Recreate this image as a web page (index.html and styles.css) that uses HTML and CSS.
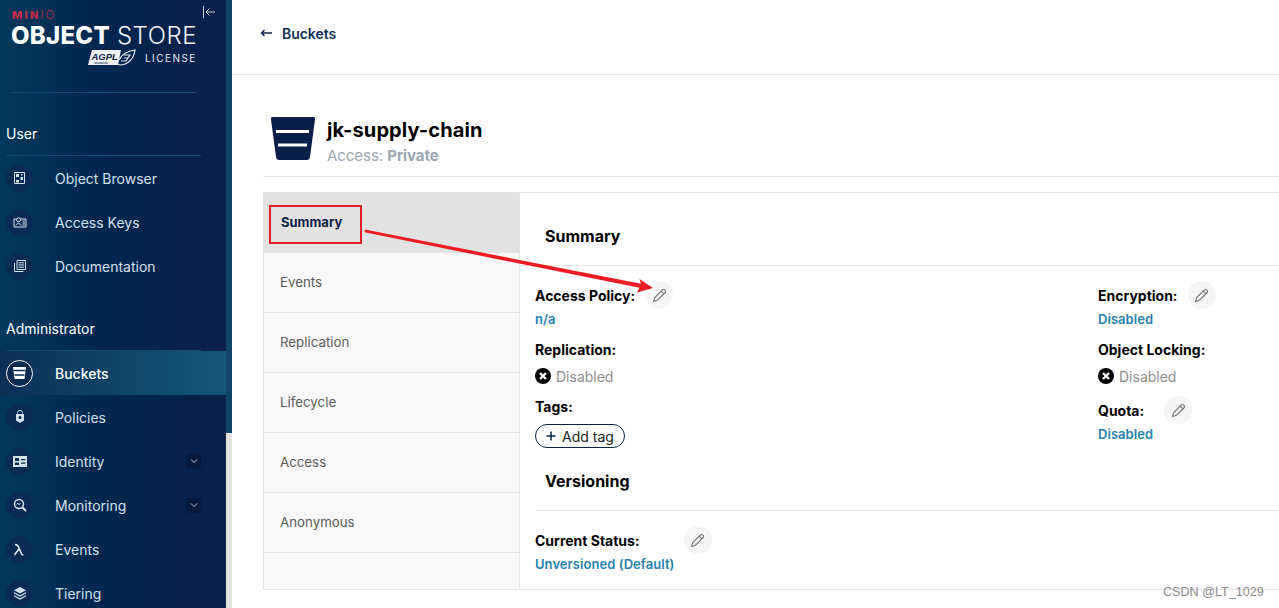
FILE: index.html
```html
<!DOCTYPE html>
<html lang="en">
<head>
<meta charset="utf-8">
<title>jk-supply-chain</title>
<link rel="stylesheet" href="styles.css">
</head>
<body>
<div class="app">
  <aside class="sidebar">
    <button class="collapse" aria-label="Collapse">
      <svg width="14" height="14" viewBox="0 0 14 14" fill="none" stroke="#c4ccd6" stroke-width="1"><path d="M1.500 1v12M13 7H4M7.500 3.500 4 7l3.500 3.500"/></svg>
    </button>
    <div class="logo">
      <div class="logo-minio"><b>MIN</b>IO</div>
      <div class="logo-title"><b>OBJECT</b><span>STORE</span></div>
      <div class="logo-license">
        <svg class="agpl" width="48" height="17" viewBox="0 0 48 17">
          <path d="M4 1h29l-3 15H0z" fill="#eef2f5"/>
          <text x="3.500" y="10.500" class="agpl-text">AGPL</text>
          <path d="M6 14h14" stroke="#0a2148" stroke-width=".8"/>
          <path d="M31 11c3-6 8-9 16-10-1 8-6 14-14 15-2 0-3-.5-4-1" fill="none" stroke="#e8edf2" stroke-width="1.200"/>
          <path d="M36 6h6l-2 3h-4m4 0-2 3h-5" fill="none" stroke="#e8edf2" stroke-width="1.200"/>
        </svg>
        <span>LICENSE</span>
      </div>
    </div>
    <div class="logo-rule"></div>

    <h3 class="nav-head nav-head-user">User</h3>
    <nav class="nav nav-user">
      <a class="nav-item"><span class="nav-icon"><svg width="11" height="12" viewBox="0 0 11 12" fill="none" stroke="#d5e2ee"><path d="M.5.500h10v11H.5z"/><path d="M2 2h3v3H2zM6.500 5H9v3H6.500zM2 8h3v2.500H2zM7 2h1.500v1.500H7z" fill="#d5e2ee" stroke="none"/></svg></span>Object Browser</a>
      <a class="nav-item"><span class="nav-icon"><svg width="14" height="12" viewBox="0 0 14 12" fill="none" stroke="#d5e2ee"><path d="M1 3h12v8H1z"/><circle cx="5.500" cy="3.800" r="2" fill="#0a2b53"/><path d="M2.800 9.500c.4-2.500 5-2.500 5.400 0M9.500 5h2.500M9.500 7h2.500M9.500 9h2.500"/></svg></span>Access Keys</a>
      <a class="nav-item"><span class="nav-icon"><svg width="14" height="14" viewBox="0 0 14 14" fill="none" stroke="#d5e2ee"><path d="M4 1.500h8.500v9H4z"/><path d="M1.500 4v8.500H10.500"/><path d="M5.500 3.800h5.500M5.500 6h5.500M5.500 8.200h5.500"/></svg></span>Documentation</a>
    </nav>

    <h3 class="nav-head nav-head-admin">Administrator</h3>
    <nav class="nav">
      <a class="nav-item nav-item-active"><span class="nav-icon"><svg width="15" height="14" viewBox="0 0 15 14"><path d="M1 1h13l-1.500 12h-10z" fill="#fff"/><path d="M1.500 4.500h12M2.500 9h10" stroke="#0a2a50" stroke-width="1.500"/></svg></span>Buckets</a>
      <a class="nav-item"><span class="nav-icon"><svg width="12" height="14" viewBox="0 0 12 14"><path d="M3.500 3.500V2.800a2.500 2.500 0 0 1 5 0v.7" fill="none" stroke="#d5e2ee"/><path d="M2 4h8v6.500L6 13l-4-2.500z" fill="#d5e2ee"/><circle cx="6" cy="7.500" r="1.500" fill="#0a2a50"/></svg></span>Policies</a>
      <a class="nav-item"><span class="nav-icon"><svg width="14" height="11" viewBox="0 0 14 11"><path d="M0 0h14v11H0z" fill="#d5e2ee"/><path d="M2 2h4v3H2zM2 6.500h4V9H2zM8 3h4.500v1.200H8zM8 6.500h4.500v1.200H8z" fill="#0a2a50"/></svg></span>Identity<span class="nav-chevron"><svg width="8" height="6" viewBox="0 0 8 6" fill="none" stroke="#b9cbdc"><path d="m1 1.500 3 3 3-3"/></svg></span></a>
      <a class="nav-item"><span class="nav-icon"><svg width="14" height="14" viewBox="0 0 14 14" fill="none" stroke="#d5e2ee" stroke-width="1.500"><circle cx="6" cy="6" r="4.500"/><path d="m9.500 9.500 3.500 3.500" stroke-width="2"/><path d="M3.500 6.500 5 5l1 2 1.500-2" stroke-width=".8"/></svg></span>Monitoring<span class="nav-chevron"><svg width="8" height="6" viewBox="0 0 8 6" fill="none" stroke="#b9cbdc"><path d="m1 1.500 3 3 3-3"/></svg></span></a>
      <a class="nav-item"><span class="nav-icon"><svg width="13" height="13" viewBox="0 0 13 13" fill="none" stroke="#e6eef5" stroke-width="1.500"><path d="M2 1.500c2.500 0 3 .8 3.800 3l2.700 6.500c.3.700.8 1 2 1M6.300 5.500 1.500 12"/></svg></span>Events</a>
      <a class="nav-item"><span class="nav-icon"><svg width="14" height="13" viewBox="0 0 14 13"><path d="m7 0 6 3.200-6 3.200L1 3.200z" fill="#d5e2ee"/><path d="m1 5.800 6 3.200 6-3.200M1 8.800 7 12l6-3.200" fill="none" stroke="#d5e2ee" stroke-width="1.300"/></svg></span>Tiering</a>
    </nav>
  </aside>
  <div class="scroll-track"><div class="scroll-thumb"></div></div>

  <main class="main">
    <div class="topbar">
      <svg width="12" height="8" viewBox="0 0 12 8" fill="none" stroke="#0a2148" stroke-width="1.400"><path d="M12 4H1.500M4.500 1 1.500 4l3 3"/></svg>
      <a class="back-link">Buckets</a>
    </div>
    <div class="page">
      <header class="bucket-head">
        <svg class="bucket-icon" width="44" height="43" viewBox="0 0 44 43">
          <path d="M2 0h40a2 2 0 0 1 2 2.400L39 40a3.500 3.500 0 0 1-3.500 3h-27A3.500 3.500 0 0 1 5 40L0 2.400A2 2 0 0 1 2 0z" fill="#0a1f47"/>
          <path d="M5 14.500h33M7 28h29" stroke="#fff" stroke-width="3"/>
        </svg>
        <div>
          <h1 class="bucket-name">jk-supply-chain</h1>
          <div class="bucket-access">Access: <b>Private</b></div>
        </div>
      </header>

      <section class="panel">
        <ul class="tabs">
          <li class="tab tab-active">Summary</li>
          <li class="tab">Events</li>
          <li class="tab">Replication</li>
          <li class="tab">Lifecycle</li>
          <li class="tab">Access</li>
          <li class="tab">Anonymous</li>
        </ul>
        <div class="content">
          <h2 class="section-title section-summary">Summary</h2>
          <div class="fields">
            <div class="col">
              <div class="label-row"><span class="label">Access Policy:</span><button class="edit" aria-label="Edit"><svg width="15" height="15" viewBox="0 0 14 14" fill="none" stroke="#707070"><path d="M1.500 12.500 2.500 9 9.800 1.700a1.200 1.200 0 0 1 1.700 0l.8.800a1.200 1.200 0 0 1 0 1.700L5 11.500z"/><path d="m8.500 3 2.500 2.500"/></svg></button></div>
              <div class="value">n/a</div>
              <div class="label label-next">Replication:</div>
              <div class="status"><span class="x-badge"><svg width="8" height="8" viewBox="0 0 8 8" stroke="#fff" stroke-width="2.400"><path d="m1 1 6 6M7 1 1 7"/></svg></span>Disabled</div>
              <div class="label label-next">Tags:</div>
              <button class="add-tag"><svg width="10" height="10" viewBox="0 0 10 10" stroke="#0a2148" stroke-width="1.500"><path d="M5 .5v9M.5 5h9"/></svg>Add tag</button>
            </div>
            <div class="col">
              <div class="label-row"><span class="label">Encryption:</span><button class="edit" aria-label="Edit"><svg width="15" height="15" viewBox="0 0 14 14" fill="none" stroke="#707070"><path d="M1.500 12.500 2.500 9 9.800 1.700a1.200 1.200 0 0 1 1.700 0l.8.800a1.200 1.200 0 0 1 0 1.700L5 11.500z"/><path d="m8.500 3 2.500 2.500"/></svg></button></div>
              <div class="value">Disabled</div>
              <div class="label label-next">Object Locking:</div>
              <div class="status"><span class="x-badge"><svg width="8" height="8" viewBox="0 0 8 8" stroke="#fff" stroke-width="2.400"><path d="m1 1 6 6M7 1 1 7"/></svg></span>Disabled</div>
              <div class="label-row label-next"><span class="label">Quota:</span><button class="edit edit-quota" aria-label="Edit"><svg width="15" height="15" viewBox="0 0 14 14" fill="none" stroke="#707070"><path d="M1.500 12.500 2.500 9 9.800 1.700a1.200 1.200 0 0 1 1.700 0l.8.800a1.200 1.200 0 0 1 0 1.700L5 11.500z"/><path d="m8.500 3 2.500 2.500"/></svg></button></div>
              <div class="value">Disabled</div>
            </div>
          </div>
          <h2 class="section-title section-versioning">Versioning</h2>
          <div class="versioning">
            <div class="label-row"><span class="label">Current Status:</span><button class="edit edit-status" aria-label="Edit"><svg width="15" height="15" viewBox="0 0 14 14" fill="none" stroke="#707070"><path d="M1.500 12.500 2.500 9 9.800 1.700a1.200 1.200 0 0 1 1.700 0l.8.800a1.200 1.200 0 0 1 0 1.700L5 11.500z"/><path d="m8.500 3 2.500 2.500"/></svg></button></div>
            <div class="value">Unversioned (Default)</div>
          </div>
        </div>
      </section>
    </div>
  </main>
</div>

<div class="callout-box"></div>
<svg class="callout-arrow" width="1279" height="608" viewBox="0 0 1279 608">
  <path d="M365 229.500 641 283.800l-1.500-4.800L653 288l-16 4.500 2.500-4.700L364.500 232.300z" fill="#ed1c24"/>
</svg>
<div class="watermark">CSDN @LT_1029</div>
</body>
</html>
```
FILE: styles.css
```css
* { box-sizing: border-box; }
html, body { margin: 0; height: 608px; overflow: hidden; background: #fff; }
body { font-family: Inter, "Liberation Sans", sans-serif; color: #000; position: relative; }
h1, h2, h3, ul { margin: 0; padding: 0; list-style: none; }
button { font-family: inherit; border: 0; padding: 0; background: none; }

.app { display: flex; height: 608px; }

/* Sidebar */
.sidebar {
  position: relative;
  width: 226px;
  flex: none;
  height: 608px;
  overflow: hidden;
  color: #d0e0ee;
  background: linear-gradient(90deg, #03395c 0%, #01264f 45%, #0b2049 100%);
}
.collapse { position: absolute; left: 202px; top: 5px; display: flex; }
.logo { height: 92px; padding: 10px 0 0 11px; color: #fff; }
.logo-minio { font-size: 11px; line-height: 10px; letter-spacing: 2.2px; color: #c72c48; font-weight: 300; padding-left: 1px; }
.logo-minio b { font-weight: 800; }
.logo-title { display: flex; gap: 7px; margin-top: 3px; font-size: 24px; line-height: 26px; }
.logo-title b { font-weight: 800; letter-spacing: .25px; }
.logo-title span { font-weight: 300; letter-spacing: .55px; color: #eef2f6; }
.logo-license { display: flex; align-items: center; gap: 9px; margin: 0 0 0 77px; height: 17px; font-size: 10px; letter-spacing: 1.45px; color: #e4eaf0; }
.agpl-text { font: italic 700 9.500px "Liberation Sans", sans-serif; fill: #0a2148; letter-spacing: 0; }
.logo-rule { height: 1px; width: 185px; margin-left: 11px; background: #124a70; }

.nav-head {
  margin-left: 6px;
  width: 195px;
  font-size: 14px;
  font-weight: 400;
  line-height: 20px;
  color: #fff;
  padding-bottom: 11px;
  border-bottom: 1px solid #124a70;
}
.nav-head-user { padding-top: 31px; }
.nav-head-admin { padding-top: 31px; }
.nav { display: flex; flex-direction: column; }
.nav-item {
  display: flex;
  align-items: center;
  height: 44px;
  padding: 0 25px 0 6px;
  font-size: 14px;
  color: #cfe0ee;
}
.nav-icon {
  width: 27px;
  height: 27px;
  flex: none;
  margin-right: 22px;
  border-radius: 50%;
  background: #0a2b53;
  display: flex;
  align-items: center;
  justify-content: center;
}
.nav-item-active {
  color: #fff;
  font-weight: 500;
  background: linear-gradient(90deg, #0b3054 0%, #14587a 100%);
}
.nav-item-active .nav-icon { border: 1.5px solid #fff; background: #0a2a50; }
.nav-chevron {
  margin-left: auto;
  width: 15px;
  height: 15px;
  border-radius: 2px;
  background: #071a3d;
  display: flex;
  align-items: center;
  justify-content: center;
}

.scroll-track { width: 6px; flex: none; background: #e2e2e2; }
.scroll-thumb { height: 433px; background: #0f4468; }

/* Main */
.main { flex: 1; min-width: 0; }
.topbar {
  height: 75px;
  display: flex;
  align-items: center;
  gap: 10px;
  padding: 0 0 8px 28px;
  border-bottom: 1px solid #e5e5e5;
}
.back-link { font-size: 14px; font-weight: 600; color: #0f2f55; letter-spacing: -.05px; }
.page { padding-left: 31px; }
.bucket-head {
  display: flex;
  gap: 12px;
  height: 102px;
  padding: 42px 0 0 8px;
  border-bottom: 1px solid #e5e5e5;
}
.bucket-icon { flex: none; }
.bucket-name { font-size: 20px; font-weight: 700; line-height: 26px; letter-spacing: .1px; }
.bucket-access { font-size: 15px; line-height: 18px; margin-top: 4px; color: #9ba6b2; letter-spacing: -.05px; }
.bucket-access b { font-weight: 700; }

.panel {
  display: flex;
  margin-top: 15px;
  height: 398px;
  border-top: 1px solid #e5e5e5;
  border-bottom: 1px solid #e5e5e5;
}
.tabs {
  width: 257px;
  flex: none;
  background: #f8f8f8;
  border-left: 1px solid #e5e5e5;
  border-right: 1px solid #e5e5e5;
}
.tab {
  height: 60px;
  display: flex;
  align-items: center;
  padding-left: 16px;
  padding-bottom: 2px;
  font-size: 13.3px;
  color: #5c5c5c;
  border-bottom: 1px solid #e5e5e5;
}
.tab-active {
  background: #e2e2e2;
  color: #0a2148;
  font-size: 13px;
  font-weight: 700;
  padding-left: 17px;
  padding-bottom: 3px;
  border-bottom: 0;
}
.content { flex: 1; min-width: 0; }
.section-title {
  font-size: 16px;
  font-weight: 700;
  line-height: 20px;
  padding: 0 0 19px 25px;
  border-bottom: 1px solid #e5e5e5;
}
.section-summary { padding-top: 33px; }
.section-versioning { padding: 23px 0 19px 10px; margin-left: 15px; }

.fields { display: flex; padding: 15px 0 0 15px; }
.col { width: 563px; display: flex; flex-direction: column; align-items: flex-start; }
.col + .col { width: auto; flex: 1; }
.label-row { display: flex; align-items: center; height: 28px; }
.label { font-size: 14px; font-weight: 700; line-height: 20px; }
.label-row .label { margin-top: 2px; }
.label-next { margin-top: 13px; }
.label-row.label-next { margin-top: 10px; }
.edit {
  width: 28px;
  height: 28px;
  margin-left: 10px;
  border-radius: 50%;
  background: #f5f5f5;
  display: flex;
  align-items: center;
  justify-content: center;
}
.edit-quota { margin-left: 20px; }
.edit-status { margin-left: 44px; }
.value { margin-top: 2px; font-size: 13px; font-weight: 600; line-height: 16px; color: #2781b0; letter-spacing: .05px; }
.status {
  display: flex;
  align-items: center;
  gap: 5px;
  margin-top: 6px;
  height: 20px;
  font-size: 14px;
  color: #8e8e8e;
}
.x-badge {
  width: 16px;
  height: 16px;
  border-radius: 50%;
  background: #000;
  display: flex;
  align-items: center;
  justify-content: center;
}
.status + .label-next:not(.label-row) { margin-top: 11px; }
.add-tag {
  margin-top: 7px;
  width: 90px;
  height: 24px;
  display: flex;
  align-items: center;
  gap: 6px;
  padding-left: 10px;
  border: 1px solid #0a2148;
  border-radius: 12px;
  font-size: 14px;
  color: #222;
  background: #fff;
}
.versioning { padding: 15px 0 0 15px; }

/* Overlays: annotations drawn on the screenshot */
.callout-box {
  position: absolute;
  left: 269px;
  top: 205px;
  width: 93px;
  height: 39px;
  border: 2px solid #e3202a;
}
.callout-arrow { position: absolute; left: 0; top: 0; pointer-events: none; }
.watermark {
  position: absolute;
  left: 1163px;
  top: 585px;
  font-family: "Liberation Sans", sans-serif;
  font-size: 12.6px;
  line-height: 15px;
  color: #8a8a8a;
}
```
